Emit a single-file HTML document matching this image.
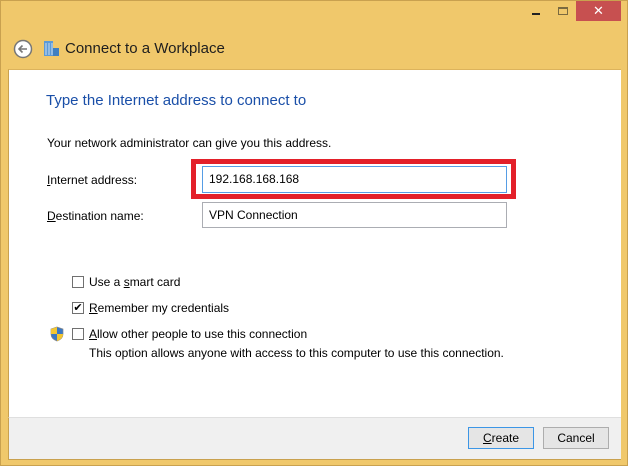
<!DOCTYPE html>
<html><head><style>
body{margin:0;width:628px;height:466px;overflow:hidden;background:#f0c86b;font-family:"Liberation Sans",sans-serif;font-size:12px;color:#000;position:relative}
.frame{position:absolute;left:0;top:0;width:626px;height:464px;border:1px solid #c9a14f}
.abs{position:absolute}
.panel{left:8px;top:69px;width:612px;height:348px;background:#fff;border-left:1px solid #c9a14f;border-top:1px solid #dcb35c}
.footer{left:8px;top:417px;width:612px;height:41px;background:#f0f0f0;border-top:1px solid #dfdfdf;border-left:1px solid #c9a14f;border-bottom:1px solid #c9a14f}
.close{left:576px;top:1px;width:45px;height:20px;background:#c75050;color:#fff;text-align:center;font-size:13px;line-height:20px}
.inp{border:1px solid #abadb3;background:#fff;padding-left:6px;line-height:24px;box-sizing:border-box}
.cb{width:12px;height:12px;border:1px solid #707070;background:#fff;box-sizing:border-box}
.btn{height:22px;box-sizing:border-box;border:1px solid #adadad;background:#e5e5e5;text-align:center;line-height:20px}
</style></head><body>
<div class="frame"></div>
<div class="abs" style="left:532px;top:13px;width:8px;height:2px;background:#222"></div>
<div class="abs" style="left:558px;top:7px;width:10px;height:8px;border:1px solid #7a6a40;border-top-width:2px;box-sizing:border-box"></div>
<div class="abs close">✕</div>
<svg class="abs" style="left:13px;top:39px" width="20" height="20"><circle cx="10" cy="10" r="8.5" fill="#fff" stroke="#777" stroke-width="1.5"/><path d="M14 10H6M9.5 6.5L6 10l3.5 3.5" stroke="#777" stroke-width="1.6" fill="none"/></svg>
<svg class="abs" style="left:43px;top:40px" width="18" height="17"><rect x="1" y="1" width="9" height="15" fill="#5d9ad6"/><rect x="10" y="8" width="6" height="8" fill="#3f7fc0"/><path d="M3 3v12M6 3v12M9 3v12" stroke="#cde" stroke-width="1"/></svg>
<div class="abs" style="left:65px;top:40px;font-size:15px;color:#1e1e1e">Connect to a Workplace</div>
<div class="abs panel"></div>
<div class="abs" style="left:46px;top:92px;font-size:15px;color:#1a4fa8">Type the Internet address to connect to</div>
<div class="abs" style="left:47px;top:136px">Your network administrator can give you this address.</div>
<div class="abs" style="left:47px;top:173px"><u>I</u>nternet address:</div>
<div class="abs" style="left:47px;top:209px"><u>D</u>estination name:</div>
<div class="abs" style="left:191px;top:159px;width:325px;height:40px;border:5px solid #e3202a;box-sizing:border-box"></div>
<div class="abs inp" style="left:202px;top:166px;width:305px;height:27px;border-color:#569de5;line-height:25px">192.168.168.168</div>
<div class="abs inp" style="left:202px;top:202px;width:305px;height:26px">VPN Connection</div>
<div class="abs cb" style="left:72px;top:276px"></div>
<div class="abs" style="left:89px;top:275px">Use a <u>s</u>mart card</div>
<div class="abs cb" style="left:72px;top:302px;font-size:11px;line-height:10px;text-align:center">✔</div>
<div class="abs" style="left:89px;top:301px"><u>R</u>emember my credentials</div>
<svg class="abs" style="left:50px;top:326px" width="14" height="16"><path d="M7 1L1 3v5c0 4 3 6 6 7 3-1 6-3 6-7V3z" fill="#3a78c4" stroke="#888" stroke-width=".7"/><path d="M7 1v7H1V3zM7 8h6c0 4-3 6-6 7z" fill="#f3c631"/></svg>
<div class="abs cb" style="left:72px;top:328px"></div>
<div class="abs" style="left:89px;top:327px"><u>A</u>llow other people to use this connection</div>
<div class="abs" style="left:89px;top:346px">This option allows anyone with access to this computer to use this connection.</div>
<div class="abs footer"></div>
<div class="abs btn" style="left:468px;top:427px;width:66px;border-color:#3c96e6"><u>C</u>reate</div>
<div class="abs btn" style="left:543px;top:427px;width:66px">Cancel</div>
</body></html>
